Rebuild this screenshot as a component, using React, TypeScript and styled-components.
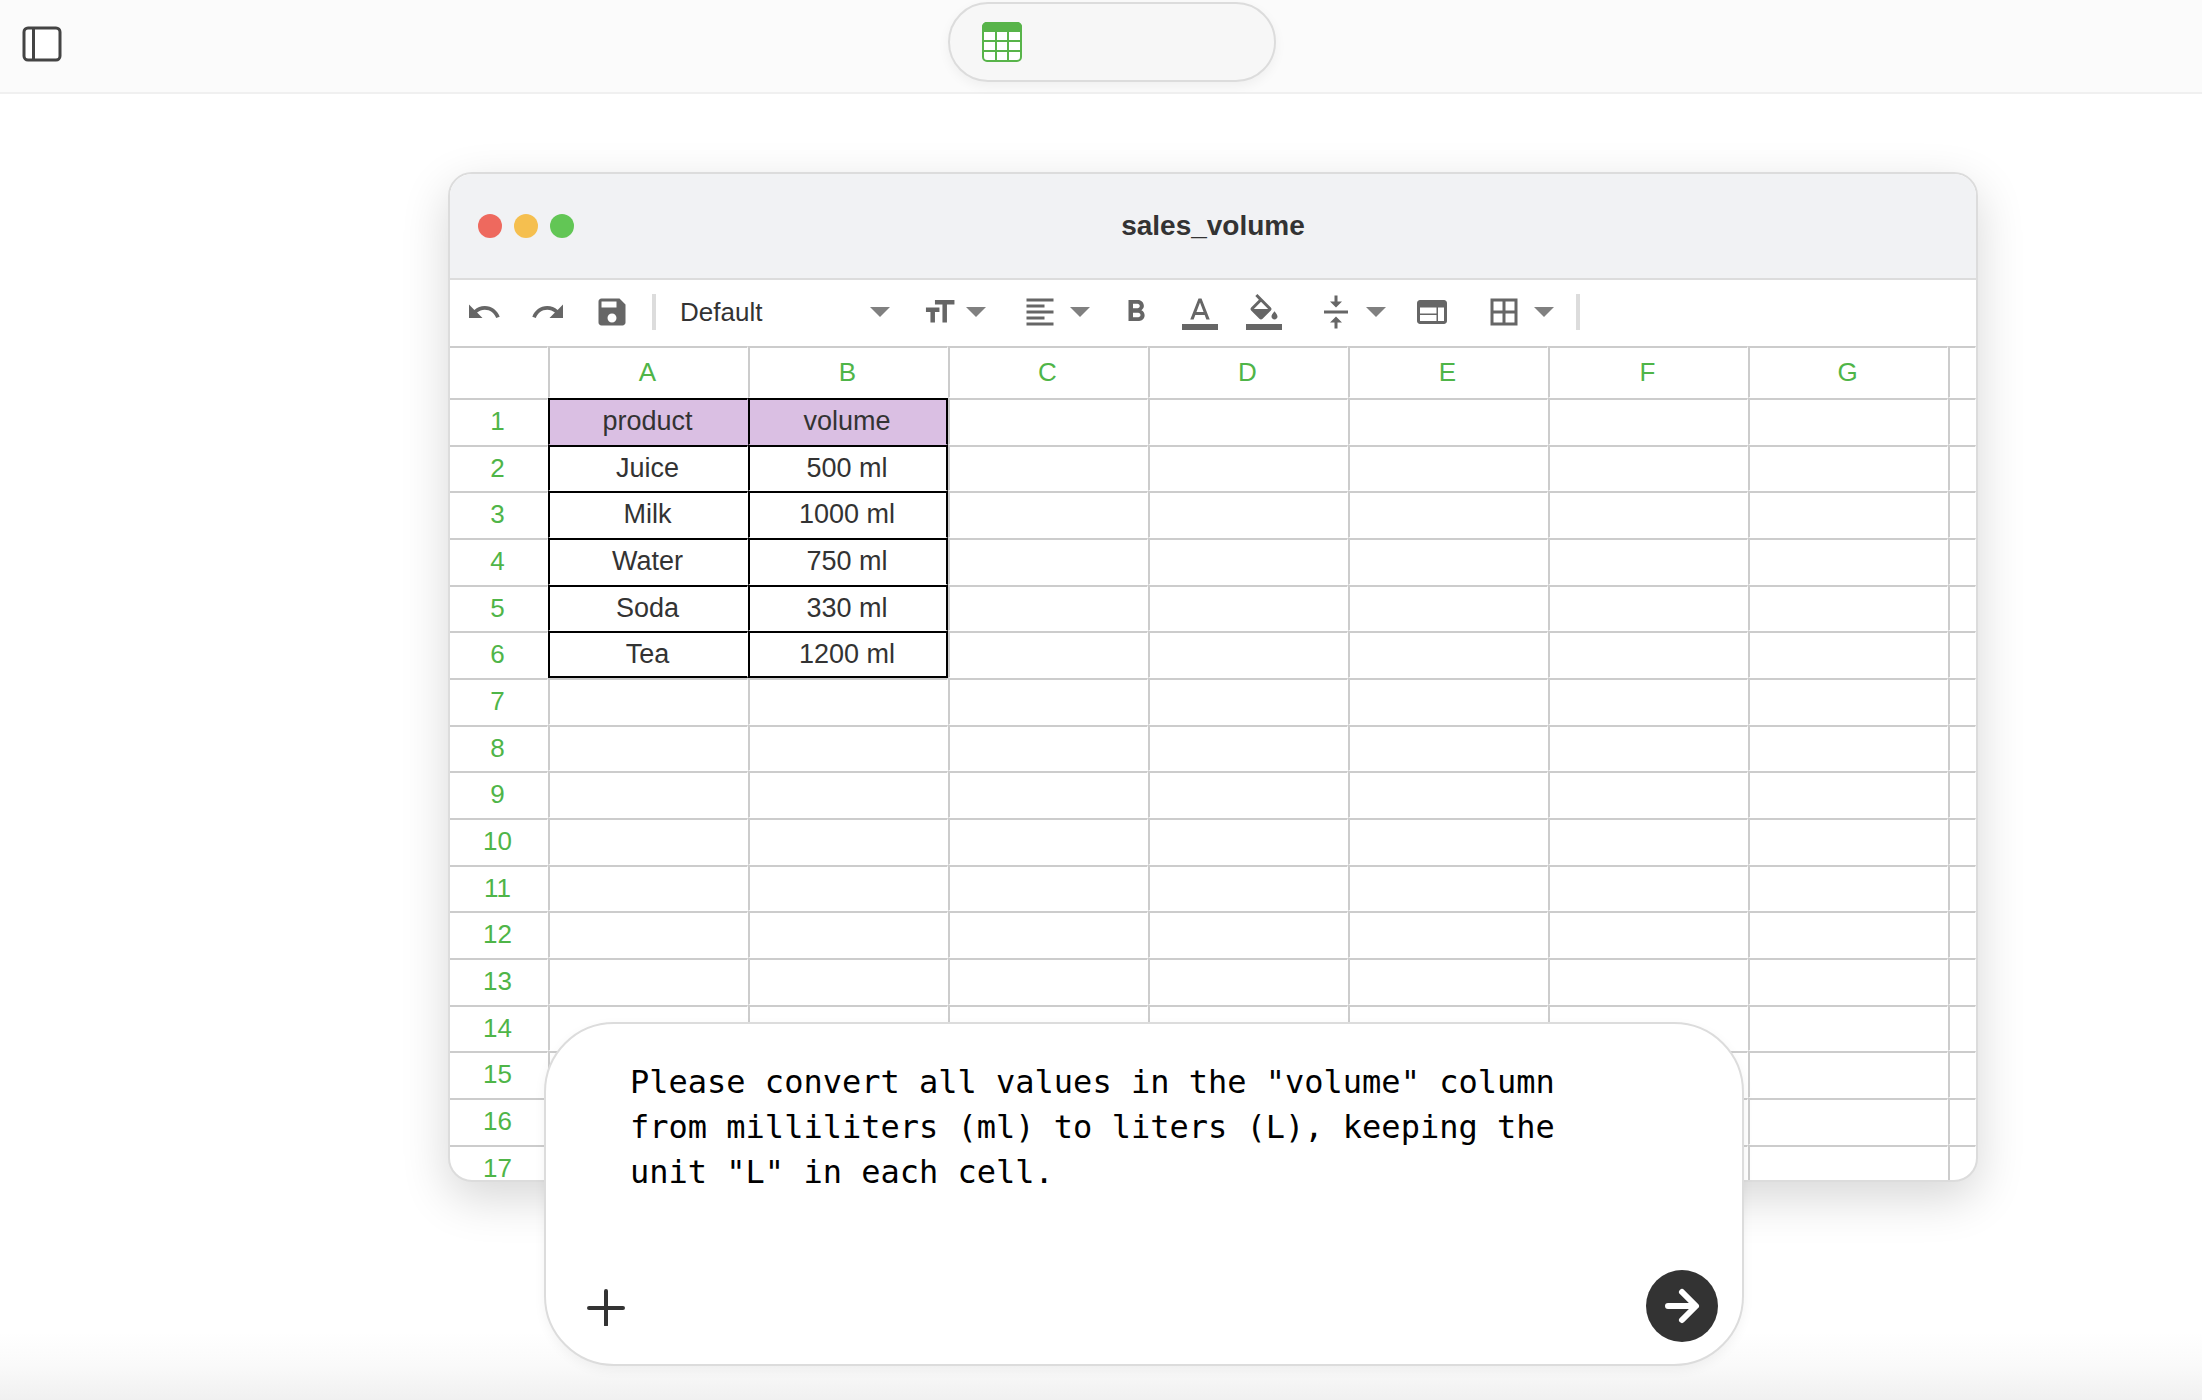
import React from "react";
import styled, { createGlobalStyle } from "styled-components";

const color = {
  ink: "#333333",
  icon: "#666666",
  caret: "#808080",
  line: "#cccccc",
  edge: "#dcdcdc",
  green: "#4fb548",
  lilac: "#dabfe3",
};

const GlobalStyle = createGlobalStyle`
  *, *::before, *::after { box-sizing: border-box; }
  body {
    margin: 0;
    background: #ffffff;
    color: ${color.ink};
    font-family: "Liberation Sans", Arial, sans-serif;
    font-size: 26px;
    line-height: 30px;
  }
  button, select, textarea { font: inherit; color: inherit; }
`;

const Page = styled.div`
  min-height: 100vh;
  background: linear-gradient(
      to bottom,
      rgba(240, 240, 240, 0),
      rgba(240, 240, 240, 0.35) 50%,
      #f0f0f0
    )
    bottom / 100% 68px no-repeat;
`;

const Header = styled.header`
  display: grid;
  grid-template-columns: 1fr auto 1fr;
  align-items: start;
  height: 94px;
  padding: 2px 0 0 22px;
  background: #fbfbfb;
  border-bottom: 2px solid #f0f0f0;
`;

const PlainButton = styled.button`
  display: flex;
  align-items: center;
  justify-content: center;
  padding: 0;
  border: 0;
  background: none;
  cursor: pointer;
`;

const SidebarButton = styled(PlainButton)`
  width: 40px;
  height: 84px;
`;

const AppPill = styled(PlainButton)`
  justify-content: flex-start;
  width: 328px;
  height: 80px;
  padding: 0 32px;
  border: 2px solid ${color.edge};
  border-radius: 40px;
  background: #f7f7f7;
  box-shadow: 0 4px 12px rgba(0, 0, 0, 0.05);
`;

const Main = styled.main`
  padding-top: 78px;
`;

const WindowArea = styled.div`
  display: flex;
  justify-content: center;
  padding-left: 224px;
`;

const SheetWindow = styled.section`
  display: flex;
  flex-direction: column;
  width: min(1530px, 100%);
  height: calc(100vh - 390px);
  overflow: hidden;
  border: 2px solid ${color.edge};
  border-radius: 24px;
  background: #ffffff;
  box-shadow: 0 16px 48px rgba(0, 0, 0, 0.16);
`;

const TitleBar = styled.div`
  display: grid;
  grid-template-columns: 1fr auto 1fr;
  align-items: center;
  flex: none;
  height: 106px;
  padding: 0 28px;
  background: #f1f2f4;
  border-bottom: 2px solid ${color.edge};
`;

const Lights = styled.div`
  display: flex;
  gap: 12px;
`;

const Light = styled.button<{ $fill: string }>`
  width: 24px;
  height: 24px;
  padding: 0;
  border: 0;
  border-radius: 50%;
  background: ${(p) => p.$fill};
`;

const Title = styled.h1`
  margin: 0;
  font-size: 28px;
  line-height: 32px;
  font-weight: 700;
`;

const Toolbar = styled.div`
  display: flex;
  align-items: center;
  flex: none;
  gap: 8px;
  height: 66px;
  padding: 0 2px 2px;
`;

const ToolGroup = styled.div`
  display: flex;
`;

const Tool = styled(PlainButton)`
  gap: 12px;
  height: 48px;
  padding: 0 14px;
`;

const Divider = styled.span`
  width: 4px;
  height: 36px;
  background: ${color.edge};
`;

const FormatField = styled.label`
  display: grid;
  align-items: center;
  width: 232px;
  height: 48px;

  > * { grid-area: 1 / 1; }
  > svg {
    justify-self: end;
    margin-right: 6px;
    pointer-events: none;
  }
`;

const FormatSelect = styled.select`
  width: 100%;
  height: 48px;
  padding: 0 32px 0 16px;
  border: 0;
  background: transparent;
  appearance: none;
`;

const SheetBody = styled.div`
  flex: 1;
  min-height: 0;
  overflow: hidden;
`;

const Sheet = styled.table`
  width: 100%;
  table-layout: fixed;
  border-collapse: separate;
  border-spacing: 0;
  text-align: center;
  line-height: 24px;
`;

const Col = styled.col<{ $width?: number }>`
  width: ${(p) => (p.$width ? `${p.$width}px` : "auto")};
`;

const Row = styled.tr`
  height: 47px;
  &:nth-child(3n + 2) { height: 46px; }
`;

const HeadRow = styled.tr`
  height: 52px;
`;

const HeadCell = styled.th`
  padding: 0 2px 2px 0;
  border: solid transparent;
  border-width: 2px 1px 1px 2px;
  border-top-color: ${color.line};
  border-left-color: ${color.line};
  color: ${color.green};
  font-weight: 400;
`;

const SideCell = styled(HeadCell)`
  border-left-width: 0;
`;

const Cell = styled.td<{ $filled: boolean; $header: boolean; $right: boolean; $bottom: boolean }>`
  padding: 0 2px 2px 0;
  border: solid transparent;
  border-width: 2px ${(p) => (p.$right ? 2 : 1)}px ${(p) => (p.$bottom ? 2 : 1)}px 2px;
  border-color: ${(p) => (p.$filled ? "#000000" : color.line)}
    ${(p) => (p.$right ? "#000000" : "transparent")}
    ${(p) => (p.$bottom ? "#000000" : "transparent")}
    ${(p) => (p.$filled ? "#000000" : color.line)};
  background: ${(p) => (p.$header ? color.lilac : "transparent")};
  font-size: 27px;
`;

const ComposerArea = styled.div`
  display: flex;
  justify-content: center;
  margin-top: -160px;
  padding-left: 86px;
`;

const Composer = styled.form`
  position: relative;
  display: flex;
  flex-direction: column;
  gap: 30px;
  width: min(1200px, 100%);
  padding: 36px 24px 22px;
  border: 2px solid ${color.edge};
  border-radius: 70px;
  background: #ffffff;
  box-shadow: 0 4px 12px rgba(0, 0, 0, 0.05);
`;

const Prompt = styled.textarea`
  display: block;
  margin: 0 88px 0 60px;
  padding: 0;
  border: 0;
  outline: 0;
  resize: none;
  overflow: hidden;
  background: transparent;
  color: #000000;
  font-family: "DejaVu Sans Mono", monospace;
  font-size: 32px;
  line-height: 45px;
`;

const Actions = styled.div`
  display: flex;
  justify-content: space-between;
`;

const RoundButton = styled(PlainButton)<{ $solid?: boolean }>`
  width: 72px;
  height: 72px;
  border-radius: 50%;
  background: ${(p) => (p.$solid ? color.ink : "transparent")};
`;

const icons = {
  undo: "M12.5 8c-2.65 0-5.05.99-6.9 2.6L2 7v9h9l-3.62-3.62c1.39-1.16 3.16-1.88 5.12-1.88 3.54 0 6.55 2.31 7.6 5.5l2.37-.78C21.08 11.03 17.15 8 12.5 8z",
  redo: "M18.4 10.6C16.55 8.99 14.15 8 11.5 8c-4.65 0-8.58 3.03-9.96 7.22L3.9 16c1.05-3.19 4.05-5.5 7.6-5.5 1.95 0 3.73.72 5.12 1.88L13 16h9V7l-3.6 3.6z",
  save: "M17 3H5c-1.11 0-2 .9-2 2v14c0 1.1.89 2 2 2h14c1.1 0 2-.9 2-2V7l-4-4zm-5 16c-1.66 0-3-1.34-3-3s1.34-3 3-3 3 1.34 3 3-1.34 3-3 3zm3-10H5V5h10v4z",
  size: "M11.3 4v3h5v12h3V7h5V4h-13zm-6 8h3v7h3v-7h3V9h-9v3z",
  align: "M15 15H3v2h12v-2zm0-8H3v2h12V7zM3 13h18v-2H3v2zm0 8h18v-2H3v2zM3 3v2h18V3H3z",
  bold: "M15.6 10.79c.97-.67 1.65-1.77 1.65-2.79 0-2.26-1.75-4-4-4H7v14h7.04c2.09 0 3.71-1.7 3.71-3.79 0-1.52-.86-2.82-2.15-3.42zM10 6.5h3c.83 0 1.5.67 1.5 1.5s-.67 1.5-1.5 1.5h-3v-3zm3.5 9H10v-3h3.5c.83 0 1.5.67 1.5 1.5s-.67 1.5-1.5 1.5z",
  textColor:
    "M0 20h24v4H0zM11 3L5.5 17h2.25l1.12-3h6.25l1.12 3h2.25L13 3h-2zm-1.38 9L12 5.67 14.38 12H9.62z",
  fill: "M0 20h24v4H0zM16.56 8.94L7.62 0 6.21 1.41l2.38 2.38-5.15 5.15c-.59.59-.59 1.54 0 2.12l5.5 5.5c.29.29.68.44 1.06.44s.77-.15 1.06-.44l5.5-5.5c.59-.58.59-1.53 0-2.12zM5.21 10L10 5.21 14.79 10H5.21zM19 11.5s-2 2.17-2 3.5c0 1.1.9 2 2 2s2-.9 2-2c0-1.33-2-3.5-2-3.5z",
  vertical: "M8 19h3v4h2v-4h3l-4-4-4 4zm8-14h-3V1h-2v4H8l4 4 4-4zM4 11v2h16v-2H4z",
  merge:
    "M20 4H4c-1.1 0-1.99.9-1.99 2L2 18c0 1.1.9 2 2 2h16c1.1 0 2-.9 2-2V6c0-1.1-.9-2-2-2zm-5 14H4v-4h11v4zm0-5H4V9h11v4zm5 5h-4V9h4v9z",
  borders:
    "M3 3v18h18V3H3zm8 16H5v-6h6v6zm0-8H5V5h6v6zm8 8h-6v-6h6v6zm0-8h-6V5h6v6z",
};

const Icon = ({ name }: { name: keyof typeof icons }) => (
  <svg width="36" height="36" viewBox="0 0 24 24" fill={color.icon} overflow="visible" aria-hidden>
    <path d={icons[name]} fillRule="evenodd" />
  </svg>
);

const Caret = () => (
  <svg width="20" height="10" viewBox="0 0 20 10" fill={color.caret} aria-hidden>
    <path d="M0 0h20L10 10z" />
  </svg>
);

const ToolButton = ({
  name,
  label,
  menu,
}: {
  name: keyof typeof icons;
  label: string;
  menu?: boolean;
}) => (
  <Tool type="button" aria-label={label}>
    <Icon name={name} />
    {menu && <Caret />}
  </Tool>
);

const columns = ["A", "B", "C", "D", "E", "F", "G", ""];
const rowCount = 17;
const data = [
  ["product", "volume"],
  ["Juice", "500 ml"],
  ["Milk", "1000 ml"],
  ["Water", "750 ml"],
  ["Soda", "330 ml"],
  ["Tea", "1200 ml"],
];

export default function App() {
  return (
    <>
      <GlobalStyle />
      <Page>
        <Header>
          <SidebarButton type="button" aria-label="Toggle sidebar">
            <svg width="40" height="36" viewBox="0 0 40 36" fill="none" stroke="#444444" strokeWidth="3">
              <rect x="2" y="2" width="36" height="32" rx="4" fill="#ffffff" />
              <path d="M11.5 2v32" />
            </svg>
          </SidebarButton>
          <AppPill type="button" aria-label="Spreadsheet">
            <svg width="40" height="40" viewBox="0 0 40 40" fill="none" stroke="#58b44a" strokeWidth="2">
              <rect x="1" y="1" width="38" height="38" rx="4" fill="#ffffff" />
              <path d="M0 10V5a5 5 0 0 1 5-5h30a5 5 0 0 1 5 5v5z" fill="#58b44a" stroke="none" />
              <path d="M14 10v29M26 10v29M1 19h38M1 29h38" />
            </svg>
          </AppPill>
        </Header>

        <Main>
          <WindowArea>
            <SheetWindow>
              <TitleBar>
                <Lights>
                  <Light $fill="#ee695e" aria-label="Close" />
                  <Light $fill="#f5bf4f" aria-label="Minimize" />
                  <Light $fill="#62c655" aria-label="Zoom" />
                </Lights>
                <Title>sales_volume</Title>
              </TitleBar>

              <Toolbar role="toolbar">
                <ToolGroup>
                  <ToolButton name="undo" label="Undo" />
                  <ToolButton name="redo" label="Redo" />
                  <ToolButton name="save" label="Save" />
                </ToolGroup>
                <Divider />
                <FormatField>
                  <FormatSelect aria-label="Font" defaultValue="Default">
                    <option>Default</option>
                  </FormatSelect>
                  <Caret />
                </FormatField>
                <ToolGroup>
                  <ToolButton name="size" label="Font size" menu />
                </ToolGroup>
                <ToolGroup>
                  <ToolButton name="align" label="Horizontal align" menu />
                  <ToolButton name="bold" label="Bold" />
                  <ToolButton name="textColor" label="Text color" />
                  <ToolButton name="fill" label="Fill color" />
                </ToolGroup>
                <ToolGroup>
                  <ToolButton name="vertical" label="Vertical align" menu />
                  <ToolButton name="merge" label="Merge cells" />
                </ToolGroup>
                <ToolGroup>
                  <ToolButton name="borders" label="Borders" menu />
                </ToolGroup>
                <Divider />
              </Toolbar>

              <SheetBody>
                <Sheet>
                  <colgroup>
                    <Col $width={98} />
                    {columns.map((name, i) => (
                      <Col key={i} $width={name ? 200 : undefined} />
                    ))}
                  </colgroup>
                  <thead>
                    <HeadRow>
                      <SideCell />
                      {columns.map((name, i) => (
                        <HeadCell key={i} scope="col">
                          {name}
                        </HeadCell>
                      ))}
                    </HeadRow>
                  </thead>
                  <tbody>
                    {Array.from({ length: rowCount }, (_, r) => (
                      <Row key={r}>
                        <SideCell scope="row">{r + 1}</SideCell>
                        {columns.map((_name, c) => {
                          const text = data[r]?.[c];
                          const filled = text !== undefined;
                          return (
                            <Cell
                              key={c}
                              $filled={filled}
                              $header={filled && r === 0}
                              $right={filled && c === 1}
                              $bottom={filled && r === data.length - 1}
                            >
                              {text}
                            </Cell>
                          );
                        })}
                      </Row>
                    ))}
                  </tbody>
                </Sheet>
              </SheetBody>
            </SheetWindow>
          </WindowArea>

          <ComposerArea>
            <Composer onSubmit={(e) => e.preventDefault()}>
              <Prompt
                rows={4}
                aria-label="Message"
                spellCheck={false}
                defaultValue={
                  'Please convert all values in the "volume" column from milliliters (ml) to liters (L), keeping the unit "L" in each cell.'
                }
              />
              <Actions>
                <RoundButton type="button" aria-label="Add attachment">
                  <svg width="40" height="40" viewBox="0 0 40 40" fill="none" stroke={color.ink} strokeWidth="4" strokeLinecap="round">
                    <path d="M20 5v34M3 22h34" />
                  </svg>
                </RoundButton>
                <RoundButton type="submit" $solid aria-label="Send">
                  <svg width="40" height="40" viewBox="0 0 40 40" fill="none" stroke="#ffffff" strokeWidth="6" strokeLinecap="round" strokeLinejoin="round">
                    <path d="M6 20h27M20 6l14 14-14 14" />
                  </svg>
                </RoundButton>
              </Actions>
            </Composer>
          </ComposerArea>
        </Main>
      </Page>
    </>
  );
}
